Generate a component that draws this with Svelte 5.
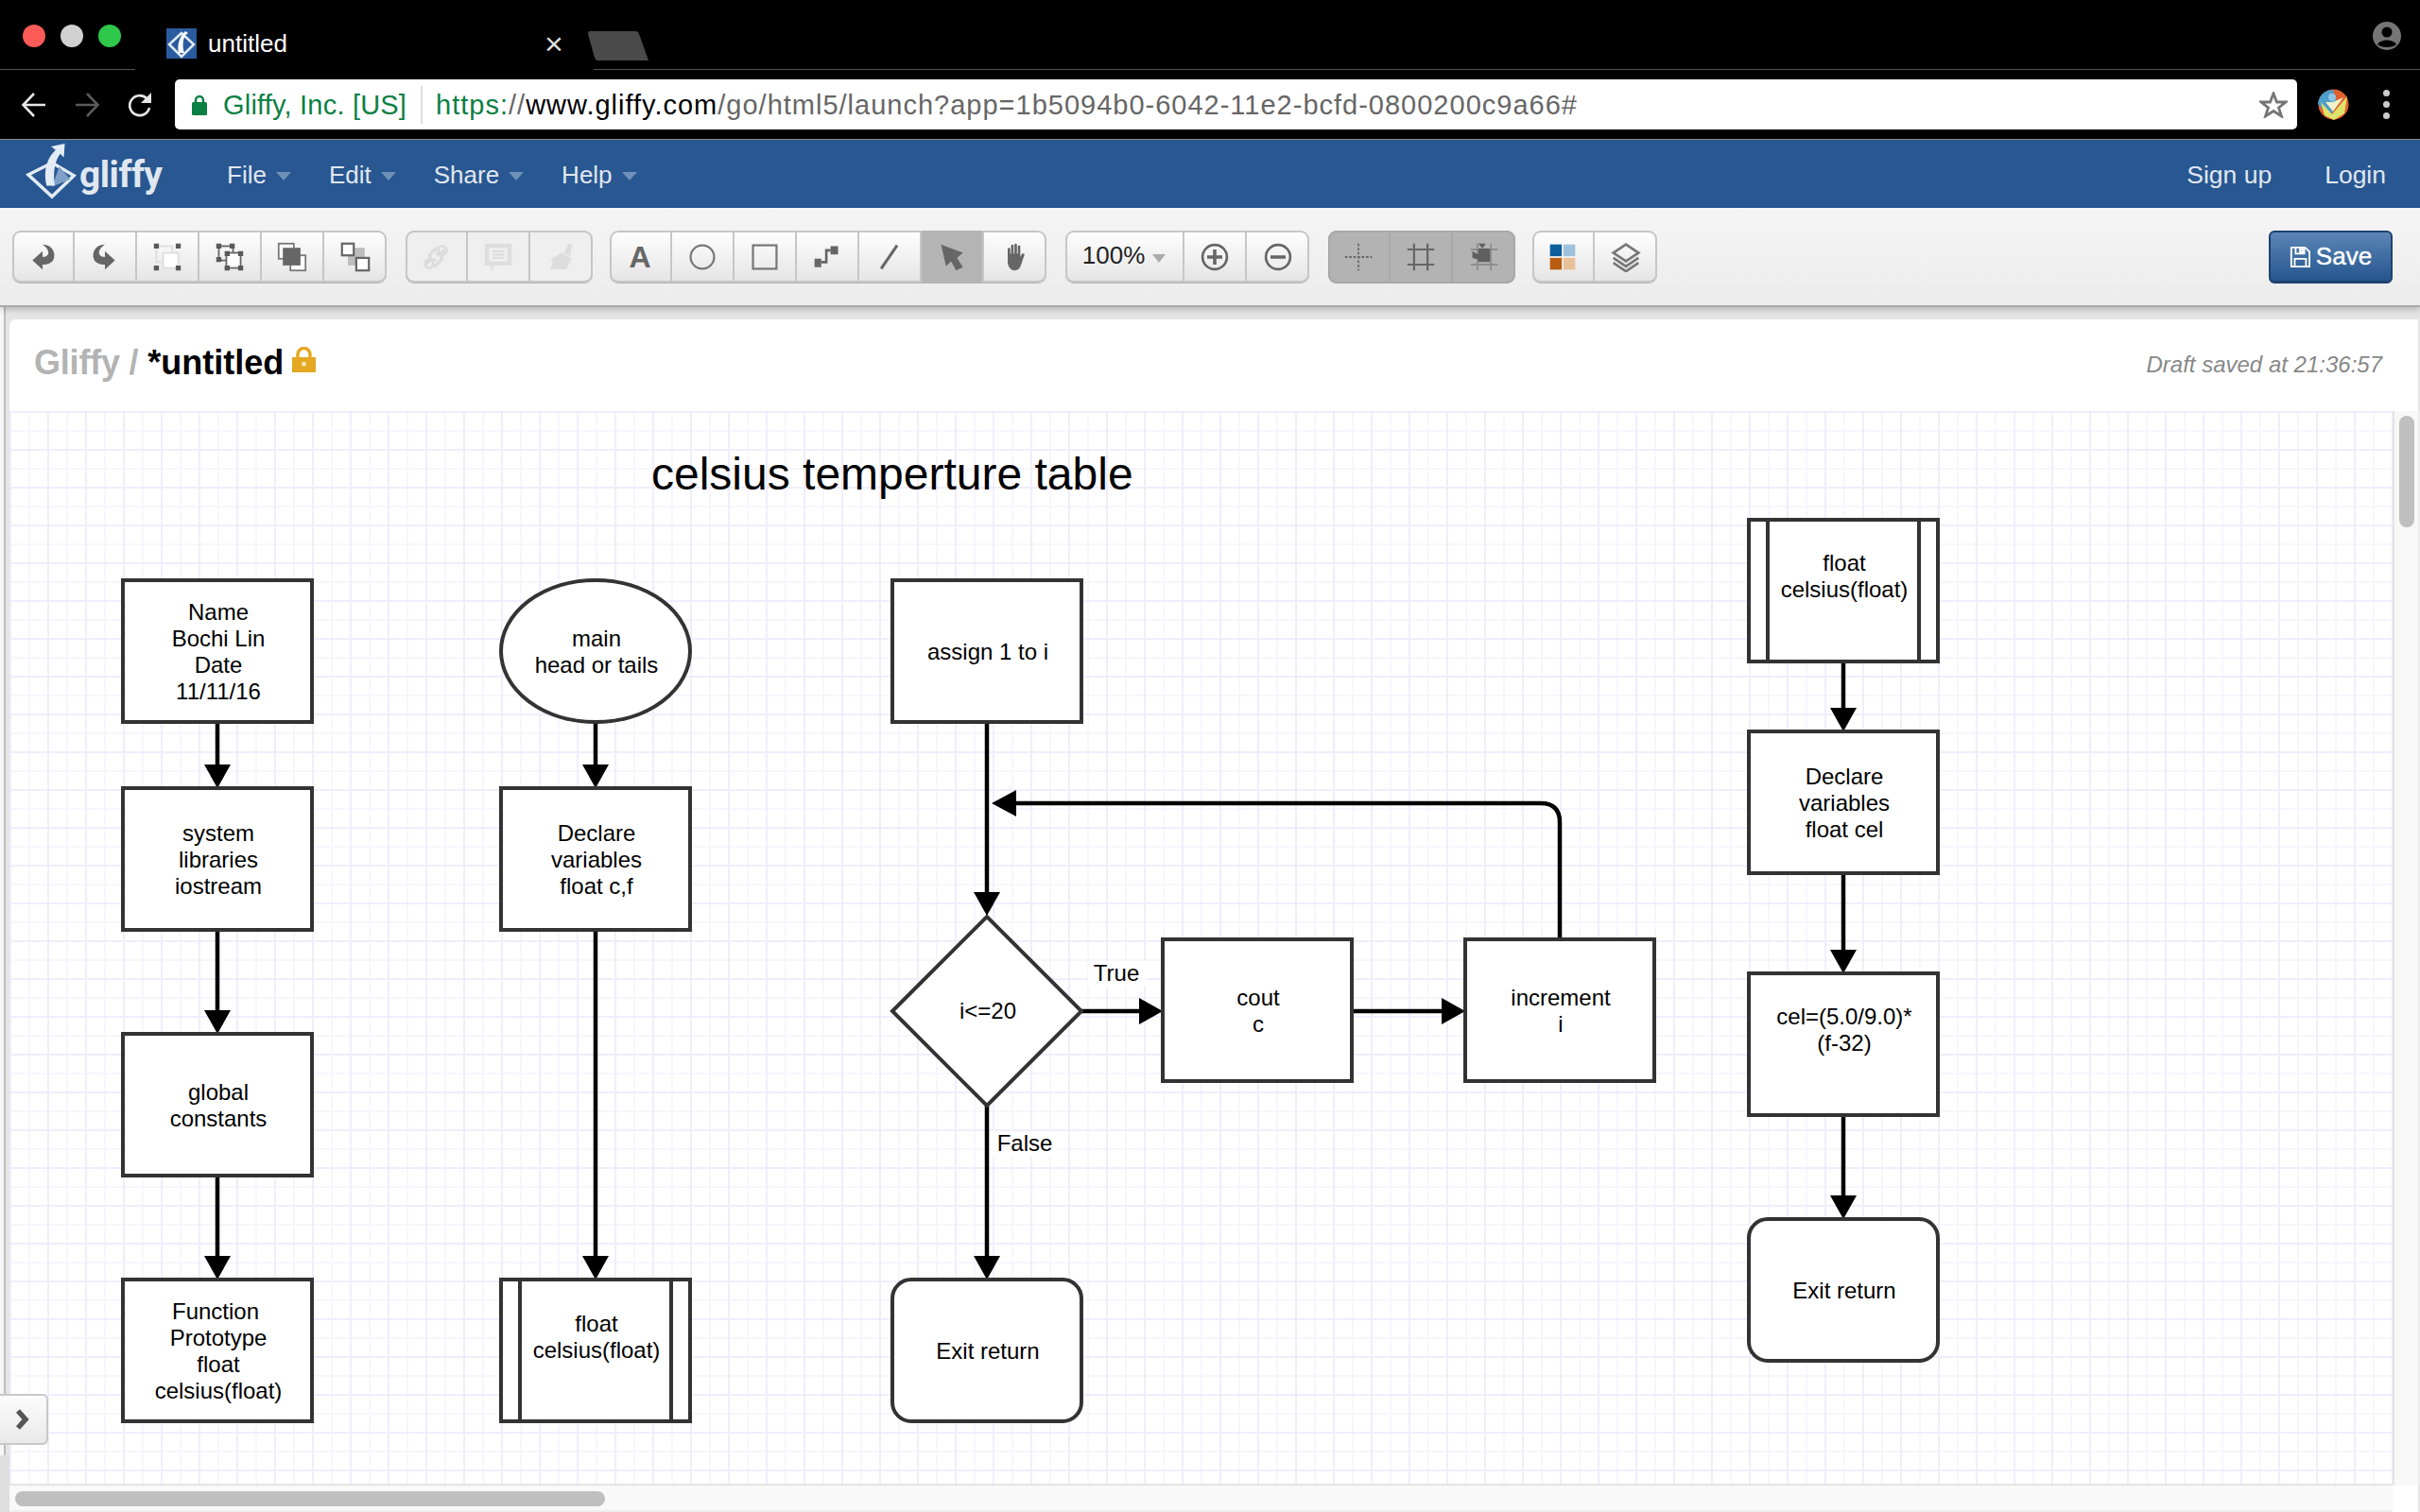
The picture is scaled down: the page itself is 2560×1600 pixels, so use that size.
<script>
  const W = 200, H = 150;
  const nodes = [
    { t: 'rect', x: 130, y: 614, lines: ['Name', 'Bochi Lin', 'Date', '11/11/16'] },
    { t: 'rect', x: 130, y: 834, lines: ['system', 'libraries', 'iostream'] },
    { t: 'rect', x: 130, y: 1094, lines: ['global', 'constants'] },
    { t: 'rect', x: 130, y: 1354, lines: ['Function', 'Prototype', 'float', 'celsius(float)'], dx: [-3, 0, 0, 0] },
    { t: 'ellipse', x: 530, y: 614, lines: ['main', 'head or tails'] },
    { t: 'rect', x: 530, y: 834, lines: ['Declare', 'variables', 'float c,f'] },
    { t: 'sub', x: 530, y: 1354, lines: ['float', 'celsius(float)'], off: -15 },
    { t: 'rect', x: 944, y: 614, lines: ['assign 1 to i'] },
    { t: 'diamond', x: 944, y: 970, lines: ['i<=20'], h: 198 },
    { t: 'round', x: 944, y: 1354, lines: ['Exit return'] },
    { t: 'rect', x: 1230, y: 994, lines: ['cout', 'c'] },
    { t: 'rect', x: 1550, y: 994, lines: ['increment', 'i'] },
    { t: 'sub', x: 1850, y: 550, lines: ['float', 'celsius(float)'], off: -16 },
    { t: 'rect', x: 1850, y: 774, lines: ['Declare', 'variables', 'float cel'] },
    { t: 'rect', x: 1850, y: 1030, lines: ['cel=(5.0/9.0)*', '(f-32)'], off: -16 },
    { t: 'round', x: 1850, y: 1290, lines: ['Exit return'] }
  ];
  function baseline(n, i) {
    const cy = n.y + (n.h ?? H) / 2 + (n.off ?? 0);
    return cy - (n.lines.length - 1) * 14 + i * 28 + 8.5;
  }
  const edges = [
    { d: 'M230 764V812', head: [230, 834, 'd'] },
    { d: 'M230 984V1072', head: [230, 1094, 'd'] },
    { d: 'M230 1244V1332', head: [230, 1354, 'd'] },
    { d: 'M630 764V812', head: [630, 834, 'd'] },
    { d: 'M630 984V1332', head: [630, 1354, 'd'] },
    { d: 'M1044 764V948', head: [1044, 969, 'd'] },
    { d: 'M1044 1170V1332', head: [1044, 1354, 'd'] },
    { d: 'M1144 1070H1208', head: [1230, 1070, 'r'] },
    { d: 'M1431 1070H1528', head: [1550, 1070, 'r'] },
    { d: 'M1650 994V870Q1650 850 1630 850H1070', head: [1049, 850, 'l'] },
    { d: 'M1950 700V752', head: [1950, 774, 'd'] },
    { d: 'M1950 924V1008', head: [1950, 1030, 'd'] },
    { d: 'M1950 1180V1268', head: [1950, 1290, 'd'] }
  ];
  function arrow([x, y, dir]) {
    if (dir === 'd') return `${x},${y} ${x - 14},${y - 25} ${x + 14},${y - 25}`;
    if (dir === 'r') return `${x},${y} ${x - 25},${y - 14} ${x - 25},${y + 14}`;
    return `${x},${y} ${x + 26},${y - 14} ${x + 26},${y + 14}`;
  }
  const menus = ['File', 'Edit', 'Share', 'Help'];
</script>

<div class="page">
  <header class="tabs">
    <div class="lights">
      <i class="dot red"></i><i class="dot grey"></i><i class="dot green"></i>
    </div>
    <div class="tab">
      <svg class="favicon" viewBox="0 0 32 32">
        <rect width="32" height="32" fill="#2a5b9e" />
        <path d="M16 5 29 17 16 30 3 17Z" fill="none" stroke="#dfe8f4" stroke-width="2.6" />
        <path d="M13 26C11 17 14 9 20 3L23 5 20 7C17 13 17 20 19 26Z" fill="#fff" />
      </svg>
      <span class="tabtitle">untitled</span>
      <span class="tabclose">×</span>
    </div>
    <div class="rest">
      <svg class="newtab" viewBox="0 0 64 31"><path d="M2 0H50Q53 0 54 3L64 31H10Q8 31 7 28L0 3Q0 0 2 0Z" fill="#4a4a4a" /></svg>
      <svg class="avatar" viewBox="0 0 30 30">
        <circle cx="15" cy="15" r="15" fill="#757575" />
        <circle cx="15" cy="11" r="5.5" fill="#000" />
        <path d="M5 24C8 18 22 18 25 24 21 28 9 28 5 24Z" fill="#000" />
      </svg>
    </div>
  </header>

  <div class="addr">
    <svg class="nav-ic first" viewBox="0 0 28 28"><path d="M26 14H3M14 2 2.5 14 14 26" fill="none" stroke="#e6e6e6" stroke-width="2.6" /></svg>
    <svg class="nav-ic" viewBox="0 0 28 28"><path d="M2 14H25M14 2 25.500 14 14 26" fill="none" stroke="#5a5a5a" stroke-width="2.600" /></svg>
    <svg class="nav-ic" viewBox="0 0 28 28"><path d="M24 17A10.500 10.500 0 1 1 21 7" fill="none" stroke="#e6e6e6" stroke-width="2.600" /><path d="M26 1V12H15Z" fill="#e6e6e6" /></svg>
    <div class="omnibox">
      <svg class="lock" viewBox="0 0 16 22"><path d="M4 9V6A4 4 0 0 1 12 6V9" fill="none" stroke="#0b8043" stroke-width="2.500" /><rect y="8" width="16" height="14" rx="1.500" fill="#0b8043" /></svg>
      <span class="secure org">Gliffy, Inc. [US]</span>
      <span class="divider"></span>
      <span class="url"><span class="secure">https:</span>//<span class="host">www.gliffy.com</span>/go/html5/launch?app=1b5094b0-6042-11e2-bcfd-0800200c9a66#</span>
      <svg class="star" viewBox="0 0 30 28"><path d="M15 2 18.500 11H28L20.500 17 23.500 26 15 20.500 6.500 26 9.500 17 2 11H11.500Z" fill="none" stroke="#757575" stroke-width="2.800" /></svg>
    </div>
    <svg class="ext" viewBox="0 0 33 33">
      <circle cx="16.500" cy="16.500" r="16" fill="#e0602c" />
      <path d="M0 16A16 16 0 0 1 16 1L20 15 13 30Z" fill="#4d9ec9" />
      <path d="M3 14 15 27 31 8 28 26 17 33 7 28Z" fill="#dfe36a" />
      <path d="M8 14 16 24 27 9 16 14Z" fill="#f0f2c8" />
      <circle cx="15" cy="9" r="4" fill="#8fc7e6" />
    </svg>
    <div class="kebab"><i></i><i></i><i></i></div>
  </div>

  <nav class="topnav">
    <div class="logo">
      <svg class="logomark" viewBox="0 0 60 66">
        <path d="M30 24 54 38 30 61 4 37Z" fill="none" stroke="#e3ebf4" stroke-width="3.500" />
        <path d="M38 28 50 42 30 50Z" fill="#7f9fc6" />
        <path d="M24 49C20 32 25 18 34 10L29 6 44 3 43 18 39 14C33 22 31 34 33 49Z" fill="#e3ebf4" />
      </svg>
      <span class="logotext">gliffy</span>
    </div>
    <div class="menus">
      {#each menus as m}
        <span class="menu">{m}<i class="caret"></i></span>
      {/each}
    </div>
    <div class="auth">
      <span>Sign up</span>
      <span>Login</span>
    </div>
  </nav>

  <div class="toolbar">
    <div class="group">
      <button class="btn"><svg viewBox="0 0 36 36"><path d="M18 3C27 3 32 9 32 16 32 24 26 27 18 27V33L6 22 18 11V18C22 18 25 16 25 13 25 9 22 6 18 3Z" fill="#666" /></svg></button>
      <button class="btn"><svg viewBox="0 0 36 36"><path d="M18 3C9 3 4 9 4 16 4 24 10 27 18 27V33L30 22 18 11V18C14 18 11 16 11 13 11 9 14 6 18 3Z" fill="#666" /></svg></button>
      <button class="btn"><svg viewBox="0 0 36 36">
        <rect x="5" y="5" width="19" height="19" fill="none" stroke="#ddd" stroke-width="2" />
        <rect x="13" y="13" width="18" height="18" fill="#fff" stroke="#ddd" stroke-width="2" />
        <path d="M2 2h6v6H2zM28 2h6v6h-6zM2 28h6v6H2zM28 28h6v6h-6z" fill="#595959" />
      </svg></button>
      <button class="btn"><svg viewBox="0 0 36 36">
        <rect x="5" y="5" width="17" height="17" fill="none" stroke="#666" stroke-width="2" />
        <rect x="14" y="13" width="17" height="18" fill="#fff" stroke="#666" stroke-width="2" />
        <path d="M2 2h6v6H2zM18 2h6v6h-6zM2 18h6v6H2zM12 11h6v6h-6zM28 11h6v6h-6zM12 28h6v6h-6zM28 28h6v6h-6z" fill="#595959" />
      </svg></button>
      <button class="btn"><svg viewBox="0 0 36 36">
        <rect x="2" y="2" width="18" height="18" fill="#fff" stroke="#777" stroke-width="2" />
        <rect x="16" y="16" width="18" height="18" fill="#fff" stroke="#777" stroke-width="2" />
        <rect x="7" y="7" width="21" height="21" fill="#666" />
      </svg></button>
      <button class="btn"><svg viewBox="0 0 36 36">
        <rect x="9" y="7" width="20" height="21" fill="#bdbdbd" />
        <rect x="2" y="2" width="14" height="14" fill="#fff" stroke="#666" stroke-width="2.500" />
        <rect x="19" y="19" width="15" height="15" fill="#fff" stroke="#666" stroke-width="2.500" />
      </svg></button>
    </div>

    <div class="group off">
      <button class="btn"><svg viewBox="0 0 36 36"><path d="M6 27 13 20M16 30 25 21A5 5 0 0 0 18 15M20 6 11 15A5 5 0 0 0 18 21M29 9 22 16" fill="none" stroke="#dcdcdc" stroke-width="3.500" /><circle cx="10" cy="26" r="5" fill="none" stroke="#dcdcdc" stroke-width="3" /><circle cx="26" cy="10" r="5" fill="none" stroke="#dcdcdc" stroke-width="3" /></svg></button>
      <button class="btn"><svg viewBox="0 0 36 36"><path d="M2 2H34V28H14L9 35V28H2Z" fill="#dedede" /><path d="M7 7H29V23H7Z" fill="#efefef" /><path d="M11 11H25M11 15H25M11 19H25" stroke="#dedede" stroke-width="2.500" /></svg></button>
      <button class="btn"><svg viewBox="0 0 36 36"><path d="M21 14 26 2 31 4 28 17ZM18 13 30 20 23 33 4 32 8 24 5 21Z" fill="#dddddd" /></svg></button>
    </div>

    <div class="group tight2">
      <button class="btn"><span class="glyphA">A</span></button>
      <button class="btn"><svg viewBox="0 0 36 36"><circle cx="18" cy="18" r="14" fill="none" stroke="#777" stroke-width="2.500" /></svg></button>
      <button class="btn"><svg viewBox="0 0 36 36"><rect x="4" y="4" width="28" height="28" fill="none" stroke="#777" stroke-width="2.500" /></svg></button>
      <button class="btn"><svg viewBox="0 0 36 36"><path d="M3 20H11V30H3ZM22 5H31V15H22Z" fill="#666" /><path d="M11 24H17V10H22" fill="none" stroke="#666" stroke-width="3" /></svg></button>
      <button class="btn"><svg viewBox="0 0 36 36"><path d="M8 32 27 4" stroke="#666" stroke-width="3.500" /></svg></button>
      <button class="btn on"><svg viewBox="0 0 36 36"><path d="M5 3 31 13 24 19 31 30 23 34 17 23 11 29Z" fill="#666" /></svg></button>
      <button class="btn"><svg viewBox="0 0 36 36"><path d="M9 15V8Q11 6 12 8V14H13V4Q15 2 16 4V14H17V3Q19 1 20 3V14H21V5Q23 3 24 5V18L26 14Q29 13 29 15L25 27Q23 34 17 34 11 34 9 26Z" fill="#666" /></svg></button>
    </div>

    <div class="group">
      <button class="btn wide"><span class="pct">100%</span><i class="zoomcaret"></i></button>
      <button class="btn"><svg viewBox="0 0 36 36"><circle cx="18" cy="18" r="14.500" fill="none" stroke="#666" stroke-width="3" /><path d="M9 18H27M18 9V27" stroke="#666" stroke-width="4" /></svg></button>
      <button class="btn"><svg viewBox="0 0 36 36"><circle cx="18" cy="18" r="14.500" fill="none" stroke="#666" stroke-width="3" /><path d="M9 18H27" stroke="#666" stroke-width="4" /></svg></button>
    </div>

    <div class="group snap">
      <button class="btn"><svg viewBox="0 0 36 36"><path d="M18 2V34M2 18H34" stroke="#666" stroke-width="2" stroke-dasharray="3 2" /></svg></button>
      <button class="btn"><svg viewBox="0 0 36 36"><path d="M10 2V34M26 2V34M2 9H34M2 27H34" stroke="#666" stroke-width="2.500" /></svg></button>
      <button class="btn"><svg viewBox="0 0 36 36"><path d="M10 2V34M26 2V34M2 9H34M2 27H34" stroke="#8d8d8d" stroke-width="2" /><path d="M11 8H25V24H11ZM4 11 11 15V21L4 19ZM11 2H20L16 8Z" fill="#5f5f5f" /></svg></button>
    </div>

    <div class="group tight2">
      <button class="btn"><svg viewBox="0 0 36 36">
        <rect x="3" y="3" width="14" height="14" fill="#0d5e9b" />
        <rect x="19" y="3" width="14" height="14" fill="#9ec2de" />
        <rect x="3" y="19" width="14" height="14" fill="#b85c12" />
        <rect x="19" y="19" width="14" height="14" fill="#e8c198" />
      </svg></button>
      <button class="btn"><svg viewBox="0 0 36 36"><path d="M18 3 33 13 18 23 3 13Z" fill="none" stroke="#777" stroke-width="3" /><path d="M3 19 18 29 33 19M3 25 18 35 33 25" fill="none" stroke="#777" stroke-width="3" /></svg></button>
    </div>

    <button class="save">
      <svg viewBox="0 0 24 24"><path d="M2 1H18L23 6V23H2Z" fill="none" stroke="#fff" stroke-width="2" /><path d="M7 1V8H17V1M12 3H15V6H12ZM6 23V14H19V23" fill="none" stroke="#fff" stroke-width="2" /></svg>
      Save
    </button>
  </div>

  <main class="main">
    <section class="panel">
      <div class="titlebar">
        <h1><span class="crumb">{'Gliffy / '}</span>*untitled</h1>
        <svg class="padlock" viewBox="0 0 25 27"><path d="M6 12V8A6.500 6.500 0 0 1 19 8V12" fill="none" stroke="#e5a823" stroke-width="3.500" /><rect y="11" width="25" height="16" fill="#e5a823" /><circle cx="12.500" cy="18" r="2.500" fill="#f8e3b0" /></svg>
        <span class="draft">Draft saved at 21:36:57</span>
      </div>
      <div class="work">
        <div class="canvas">
          <svg class="diagram" width="2521" height="1135" viewBox="10 435 2521 1135">
            <text class="heading" x="689" y="518">celsius temperture table</text>
            {#each edges as e}
              <path class="edge" d={e.d} />
              <polygon class="head" points={arrow(e.head)} />
            {/each}
            {#each nodes as n}
              {#if n.t === 'ellipse'}
                <ellipse class="shape" cx={n.x + W / 2} cy={n.y + H / 2} rx={W / 2} ry={H / 2} />
              {:else if n.t === 'diamond'}
                <polygon class="shape" points={`${n.x},${n.y + 100} ${n.x + 100},${n.y} ${n.x + 200},${n.y + 100} ${n.x + 100},${n.y + 200}`} />
              {:else}
                <rect class="shape" x={n.x} y={n.y} width={W} height={H} rx={n.t === 'round' ? 20 : 0} />
                {#if n.t === 'sub'}
                  <path class="shape" d={`M${n.x + 20} ${n.y}V${n.y + H}M${n.x + W - 20} ${n.y}V${n.y + H}`} />
                {/if}
              {/if}
              {#each n.lines as line, i}
                <text class="label" x={n.x + W / 2 + 1 + (n.dx?.[i] ?? 0)} y={baseline(n, i)}>{line}</text>
              {/each}
            {/each}
            <rect x="1151" y="1017" width="61" height="27" fill="#fff" />
            <text class="label" x="1181" y="1038">True</text>
            <rect x="1050" y="1197" width="68" height="27" fill="#fff" />
            <text class="label" x="1084" y="1218">False</text>
          </svg>
        </div>
        <div class="vtrack"><i class="vthumb"></i></div>
      </div>
      <div class="htrack"><i class="hthumb"></i></div>
    </section>
    <button class="drawer" aria-label="Open shapes">
      <svg viewBox="0 0 16 24"><path d="M3 3 11 12 3 21" fill="none" stroke="#555" stroke-width="5.500" /></svg>
    </button>
  </main>
</div>

<style>
  :global(body) { margin: 0; background: #fff; }
  .page {
    width: 2560px; height: 1600px; display: flex; flex-direction: column; overflow: hidden;
    font-family: "Liberation Sans", Arial, sans-serif;
  }
  i { display: block; }
  button { font-family: inherit; padding: 0; margin: 0; }

  .tabs { height: 74px; background: #000; display: flex; flex: none; }
  .lights {
    width: 143px; border-bottom: 1px solid #555; display: flex; gap: 16px;
    padding: 26px 0 0 24px; box-sizing: border-box;
  }
  .dot { width: 24px; height: 24px; border-radius: 50%; }
  .red { background: #fc5b57; }
  .grey { background: #d0d0d0; }
  .green { background: #2fc84a; }
  .tab { width: 485px; display: flex; align-items: flex-start; padding-left: 33px; box-sizing: border-box; color: #fff; }
  .favicon { width: 32px; height: 32px; margin-top: 30px; flex: none; }
  .tabtitle { font-size: 26px; margin: 31px 0 0 12px; width: 356px; }
  .tabclose { font-size: 34px; color: #ddd; line-height: 34px; margin-top: 29px; }
  .rest { flex: 1; border-bottom: 1px solid #555; display: flex; justify-content: space-between; align-items: flex-start; padding-right: 20px; }
  .newtab { width: 64px; height: 31px; margin: 33px 0 0 -6px; }
  .avatar { width: 30px; height: 30px; margin-top: 23px; }

  .addr { height: 73px; background: #000; border-bottom: 1px solid #8a8a8a; display: flex; align-items: center; flex: none; }
  .nav-ic { width: 28px; height: 28px; margin-left: 28px; flex: none; }
  .nav-ic.first { margin-left: 22px; }
  .omnibox {
    margin-left: 23px; width: 2245px; height: 53px; background: #fff; border-radius: 5px;
    display: flex; align-items: center; font-size: 29px; color: #666; box-sizing: border-box; padding-left: 18px;
  }
  .lock { width: 16px; height: 22px; flex: none; }
  .org { margin: 2px 0 0 17px; letter-spacing: .2px; }
  .secure { color: #0b8043; }
  .divider { width: 2px; height: 40px; background: #ddd; margin: 0 14px 0 15px; }
  .url { flex: 1; letter-spacing: 1px; white-space: nowrap; margin-top: 2px; }
  .host { color: #000; }
  .star { width: 30px; height: 28px; margin-right: 10px; flex: none; }
  .ext { width: 33px; height: 33px; margin-left: 22px; flex: none; }
  .kebab { display: flex; flex-direction: column; gap: 5px; margin-left: 36px; }
  .kebab i { width: 7px; height: 7px; border-radius: 50%; background: #ccc; }

  .topnav { height: 72px; background: #285791; display: flex; align-items: center; color: #e0e7f0; font-size: 26px; flex: none; }
  .logo { width: 240px; display: flex; align-items: center; padding-left: 26px; box-sizing: border-box; }
  .logomark { width: 58px; height: 64px; flex: none; margin-top: -6px; }
  .logotext { font-family: Roboto, sans-serif; font-weight: 700; font-size: 39px; margin: 2px 0 0 0; color: #e0e7f0; letter-spacing: -0.5px; }
  .menus { display: flex; gap: 40px; padding-top: 2px; }
  .menu { display: flex; align-items: center; }
  .caret {
    width: 0; height: 0; margin-left: 10px; margin-top: 3px; flex: none;
    border-left: 8px solid transparent; border-right: 8px solid transparent; border-top: 9px solid #6f90b8;
  }
  .zoomcaret {
    width: 0; height: 0; margin: 3px 0 0 8px; flex: none;
    border-left: 7px solid transparent; border-right: 7px solid transparent; border-top: 9px solid #aaa;
  }
  .auth { margin-left: auto; display: flex; gap: 56px; padding: 2px 36px 0 0; font-size: 26.500px; }

  .toolbar {
    height: 105px; flex: none; box-sizing: border-box; background: linear-gradient(#f5f5f5, #ececec);
    border-bottom: 2px solid #aaa; box-shadow: 0 3px 6px rgba(0, 0, 0, .18); position: relative; z-index: 1;
    display: flex; align-items: flex-start; padding: 24px 29px 0 13px; gap: 20px;
  }
  .group { display: flex; height: 56px; border-radius: 9px; overflow: hidden; box-shadow: inset 0 0 0 2px #c6c6c6; background: linear-gradient(#fff, #e4e4e4); flex: none; border-bottom: 1px solid #b4b4b4; box-sizing: border-box; }
  .tight2 { margin-left: -2px; }
  .btn {
    width: 66px; height: 55px; border: 0; border-right: 2px solid #c6c6c6; background: transparent;
    display: flex; align-items: center; justify-content: center; flex: none; box-sizing: border-box; color: #222;
  }
  .btn:last-child { border-right: 0; }
  .btn svg { width: 32px; height: 32px; }
  .wide { width: 126px; font-size: 26px; }
  .pct { margin-top: -2px; }
  .on { background: #b4b4b4; }
  .off { background: #efefef; }
  .snap { background: #b3b3b3; box-shadow: inset 0 0 0 2px #a8a8a8; border-bottom: 0; }
  .snap .btn { border-right-color: #a8a8a8; }
  .glyphA { font-size: 32px; font-weight: 700; color: #666; line-height: 1; }
  .save {
    margin-left: auto; width: 131px; height: 56px; border-radius: 6px; border: 2px solid #1f426f; border-bottom-width: 3px;
    background: linear-gradient(#5b85b5, #25568f); color: #fff; font-size: 26px; display: flex; align-items: center; justify-content: center; gap: 6px; box-sizing: border-box; -webkit-text-stroke: .4px #fff;
  }
  .save svg { width: 22px; height: 24px; }

  .main {
    flex: 1; min-height: 0; display: flex; position: relative; box-sizing: border-box; padding: 13px 2px 0 10px;
    background: linear-gradient(to right, #f6f6f6 0 4px, #bcbcbc 4px 6px, #e4e4e4 6px);
  }
  .main::after { content: ""; position: absolute; left: 0; bottom: 0; width: 10px; height: 60px; background: #dedede; }
  .panel { flex: 1; min-width: 0; background: #fff; border-top-left-radius: 6px; display: flex; flex-direction: column; }
  .titlebar { height: 97px; display: flex; align-items: flex-start; padding: 25px 38px 0 26px; box-sizing: border-box; flex: none; }
  h1 { margin: 0; font-size: 36px; font-weight: 700; color: #000; line-height: 42px; white-space: pre; }
  .crumb { color: #b3b3b3; letter-spacing: -.2px; }
  .padlock { width: 25px; height: 27px; margin: 4px 0 0 9px; }
  .draft { margin-left: auto; font-size: 24px; font-style: italic; color: #888; margin-top: 8px; line-height: 30px; }
  .work { flex: 1; min-height: 0; display: flex; }
  .canvas {
    width: 2521px; height: 1135px; flex: none; border-right: 2px solid #e4e4e4; border-bottom: 2px solid #e4e4e4; overflow: hidden;
    background-color: #fff;
    background-image:
      linear-gradient(to right, #f0edfd 2px, transparent 2px),
      linear-gradient(to bottom, #f0edfd 2px, transparent 2px),
      linear-gradient(to right, #f7f6fe 2px, transparent 2px),
      linear-gradient(to bottom, #f7f6fe 2px, transparent 2px);
    background-size: 40px 40px, 40px 40px, 20px 20px, 20px 20px;
  }
  .diagram { display: block; }
  .vtrack { flex: 1; background: #f8f8f8; padding: 5px 4px 0 5px; border-right: 2px solid #eee; }
  .vthumb { width: 16px; height: 118px; border-radius: 8px; background: #bfbfbf; }
  .htrack { height: 28px; flex: none; background: #f9f9f9; width: 2521px; padding: 6px 0 0 6px; box-sizing: border-box; border-bottom: 2px solid #eee; }
  .hthumb { width: 624px; height: 16px; border-radius: 8px; background: #bfbfbf; }

  .shape { fill: #fff; stroke: #333; stroke-width: 4; }
  path.shape { fill: none; }
  .edge { fill: none; stroke: #000; stroke-width: 4.500; }
  .head { fill: #000; }
  text { font-family: "Liberation Sans", Arial, sans-serif; text-anchor: middle; fill: #000; }
  .label { font-size: 24px; }
  .heading { font-size: 48px; text-anchor: start; }

  .drawer {
    position: absolute; left: 0; top: 1150px; width: 51px; height: 54px; background: linear-gradient(#fcfcfc, #e9e9e9);
    border: 2px solid #c8c8c8; border-left: 0; border-radius: 0 6px 6px 0; display: flex; align-items: center; justify-content: center; box-sizing: border-box; padding-right: 2px; z-index: 1;
  }
  .drawer svg { width: 16px; height: 24px; flex: none; }
</style>
